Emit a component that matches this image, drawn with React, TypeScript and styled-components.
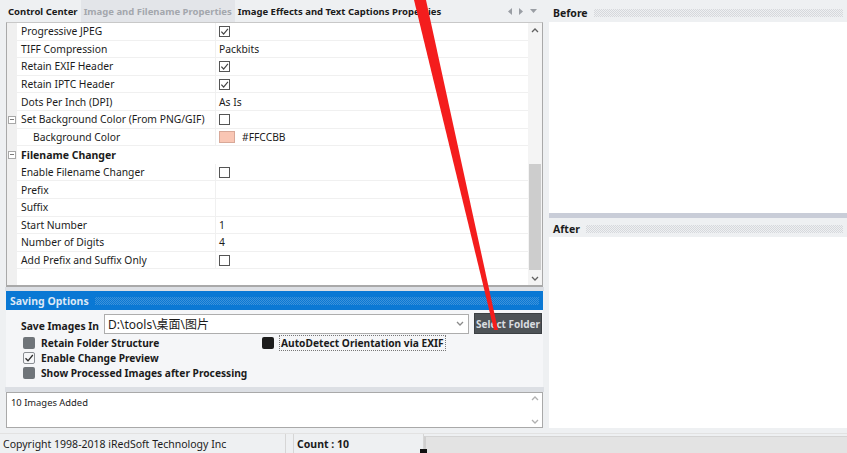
import React from "react";
import styled, { createGlobalStyle } from "styled-components";

const FONT = `"Noto Sans", "Noto Sans CJK SC", sans-serif`;

const Global = createGlobalStyle`
  html, body { margin: 0; padding: 0; background: #eef0f2; }
  body { font-family: ${FONT}; font-size: 10px; color: #1b1b1b; }
  * { box-sizing: border-box; }
`;

const Root = styled.div`
  position: relative;
  width: 847px;
  height: 453px;
  overflow: hidden;
  display: flex;
  flex-direction: column;
  background: #eef0f2;
`;

const Main = styled.div`
  display: flex;
  height: 433px;
`;

const LeftCol = styled.div`
  width: 547px;
  display: flex;
  flex-direction: column;
  padding-left: 6px;
  padding-right: 4px;
`;

const TabStrip = styled.div`
  height: 22px;
  display: flex;
  align-items: center;
  margin-left: -6px;
  padding-left: 5px;
`;

const Tab = styled.div<{ $active?: boolean }>`
  font-weight: 700;
  font-size: 9.5px;
  height: 22px;
  display: flex;
  align-items: center;
  padding: 0 3px;
  color: ${(p) => (p.$active ? "#a3a7ad" : "#1b1b1b")};
  background: ${(p) => (p.$active ? "#e3e5e9" : "transparent")};
  white-space: nowrap;
`;

const TabArrows = styled.div`
  margin-left: auto;
  display: flex;
  gap: 7px;
  padding-right: 6px;
  align-items: center;
`;

const Grid = styled.div`
  height: 265px;
  display: flex;
  background: #fff;
  border-left: 1px solid #a9a9a9;
  border-top: 1px solid #c8c8c8;
  border-right: 1px solid #a9a9a9;
  border-bottom: 2px solid #a9a9a9;
`;

const GridBody = styled.div`
  flex: 1;
  display: flex;
  flex-direction: column;
  background: linear-gradient(to right, #f0f0f0 10px, #fff 10px);
`;

const Row = styled.div`
  height: 17.6px;
  display: flex;
  align-items: stretch;
`;

const Margin = styled.div`
  width: 10px;
  display: flex;
  align-items: center;
  justify-content: center;
  background: #f0f0f0;
`;

const Label = styled.div<{ $indent?: boolean }>`
  width: 199px;
  display: flex;
  align-items: center;
  padding-left: ${(p) => (p.$indent ? 16 : 4)}px;
  border-bottom: 1px solid #f0f0f0;
  border-right: 1px solid #f0f0f0;
  white-space: nowrap;
  font-size: 10.3px;
`;

const Value = styled.div`
  flex: 1;
  display: flex;
  align-items: center;
  gap: 7px;
  padding-left: 3px;
  border-bottom: 1px solid #f0f0f0;
  font-size: 10.3px;
`;

const Category = styled.div`
  flex: 1;
  display: flex;
  align-items: center;
  padding-left: 4px;
  font-weight: 700;
  font-size: 10.5px;
`;

const Expander = styled.span`
  width: 8px;
  height: 8px;
  border: 1px solid #a8a8a8;
  background: #fff;
  display: flex;
  align-items: center;
  justify-content: center;
  &::after {
    content: "";
    width: 4px;
    height: 1px;
    background: #7a7a7a;
  }
`;

const GridCheck = styled.span`
  width: 11px;
  height: 11px;
  border: 1px solid #555;
  background: #fff;
  display: flex;
  align-items: center;
  justify-content: center;
`;

const Swatch = styled.span<{ $c: string }>`
  width: 16px;
  height: 12px;
  background: ${(p) => p.$c};
  border: 1px solid #d8a898;
`;

const Scrollbar = styled.div`
  width: 14px;
  background: #f4f4f4;
  display: flex;
  flex-direction: column;
  align-items: center;
`;

const ScrollArrow = styled.div`
  height: 14px;
  width: 14px;
  display: flex;
  align-items: center;
  justify-content: center;
`;

const ScrollTrack = styled.div`
  flex: 1;
  width: 12px;
  display: flex;
  flex-direction: column;
  justify-content: flex-end;
  padding-bottom: 1px;
`;

const Thumb = styled.div`
  height: 106px;
  background: #cdcdcd;
`;

const Gap = styled.div<{ $h: number }>`
  height: ${(p) => p.$h}px;
  background: #dcdfe4;
  margin: 0 -1px;
`;

const SectionHeader = styled.div<{ $blue?: boolean; $h: number }>`
  height: ${(p) => p.$h}px;
  display: flex;
  align-items: center;
  gap: 6px;
  padding-left: 4px;
  padding-top: ${(p) => (p.$blue ? 0 : 3)}px;
  font-weight: 700;
  font-size: 10.5px;
  color: ${(p) => (p.$blue ? "#dce8f6" : "#1b1b1b")};
  background: ${(p) => (p.$blue ? "#0a78d4" : "#eef0f2")};
`;

const Hatch = styled.span<{ $blue?: boolean }>`
  flex: 1;
  height: 8px;
  margin-right: 4px;
  background-image: repeating-conic-gradient(
    ${(p) => (p.$blue ? "#3d92da" : "#d6d8dc")} 0 25%,
    transparent 0 50%
  );
  background-size: 2px 2px;
`;

const SaveBody = styled.div`
  height: 77px;
  background: #f5f6f8;
  display: flex;
  flex-direction: column;
  padding: 3px 1px 0 15px;
`;

const SaveRow = styled.div`
  display: flex;
  align-items: center;
  height: 21px;
  gap: 5px;
`;

const SaveLabel = styled.div`
  font-weight: 700;
  font-size: 10.3px;
  width: 78px;
  padding-top: 4px;
  white-space: nowrap;
`;

const Combo = styled.div`
  width: 365px;
  height: 20px;
  background: #fff;
  border: 1px solid #adadad;
  display: flex;
  align-items: center;
  padding-left: 3px;
  font-size: 12px;
  justify-content: space-between;
  padding-right: 4px;
`;

const Button = styled.div`
  flex: 1;
  height: 21px;
  background: #4e5357;
  border: 1px solid #3c4043;
  color: #d9dde0;
  font-weight: 700;
  font-size: 10px;
  white-space: nowrap;
  display: flex;
  align-items: center;
  justify-content: center;
`;

const Options = styled.div`
  display: grid;
  grid-template-columns: 239px 1fr;
  grid-auto-rows: 15px;
  padding-left: 2px;
  margin-top: 1px;
`;

const Opt = styled.div`
  display: flex;
  align-items: center;
  gap: 6px;
  font-weight: 700;
  font-size: 10.2px;
  white-space: nowrap;
`;

const OptBox = styled.span<{ $kind: "gray" | "checked" | "black" }>`
  width: 12px;
  height: 12px;
  border-radius: 2px;
  display: flex;
  align-items: center;
  justify-content: center;
  background: ${(p) =>
    p.$kind === "gray" ? "#6f7479" : p.$kind === "black" ? "#1c1c1c" : "#f5f6f8"};
  border: 1px solid ${(p) => (p.$kind === "checked" ? "#8a8e93" : "transparent")};
`;

const Focus = styled.span`
  outline: 1px dotted #777;
  padding: 0 1px;
`;

const LogBox = styled.div`
  height: 36px;
  background: #fff;
  border: 1px solid #a9a9a9;
  display: flex;
  font-size: 9.4px;
`;

const LogText = styled.div`
  flex: 1;
  padding: 3px 0 0 4px;
`;

const LogScroll = styled.div`
  width: 14px;
  display: flex;
  flex-direction: column;
  justify-content: space-between;
  align-items: center;
  padding: 3px 0;
`;

const RightCol = styled.div`
  flex: 1;
  display: flex;
  flex-direction: column;
  padding-left: 2px;
`;

const Pane = styled.div<{ $h: number }>`
  height: ${(p) => p.$h}px;
  background: #fff;
`;

const Splitter = styled.div`
  height: 5px;
  background: #c9cdd8;
`;

const BottomGap = styled.div`
  height: 5px;
`;

const StatusBar = styled.div`
  height: 20px;
  display: flex;
  background: #eef0f2;
  border-top: 1px solid #e2e2e2;
  font-size: 10.5px;
`;

const StatusCell = styled.div<{ $w?: number; $bold?: boolean }>`
  width: ${(p) => (p.$w ? `${p.$w}px` : "auto")};
  flex: ${(p) => (p.$w ? "none" : 1)};
  display: flex;
  align-items: center;
  padding-left: 3px;
  font-weight: ${(p) => (p.$bold ? 700 : 400)};
  border-right: 1px solid #d6d6d6;
  white-space: nowrap;
`;

const StatusInset = styled.div`
  flex: 1;
  margin-top: 2px;
  background: #e3e3e3;
  border-left: 2px solid #cfcfcf;
  border-top: 1px solid #d4d4d4;
`;

const Overlay = styled.svg`
  position: absolute;
  left: 0;
  top: 0;
  pointer-events: none;
`;

const Check = ({ color = "#333", size = 9 }: { color?: string; size?: number }) => (
  <svg width={size} height={size} viewBox="0 0 10 10">
    <polyline points="1.5,5.2 4,7.8 8.8,2" fill="none" stroke={color} strokeWidth="1.3" />
  </svg>
);

const Chevron = ({ up, color = "#606060" }: { up?: boolean; color?: string }) => (
  <svg width="8" height="5" viewBox="0 0 8 5">
    <polyline
      points={up ? "1,4 4,1 7,4" : "1,1 4,4 7,1"}
      fill="none"
      stroke={color}
      strokeWidth="1.3"
    />
  </svg>
);

type Item =
  | { kind: "row"; label: string; check?: boolean; text?: string; swatch?: string; expander?: boolean; indent?: boolean }
  | { kind: "cat"; label: string };

const items: Item[] = [
  { kind: "row", label: "Progressive JPEG", check: true },
  { kind: "row", label: "TIFF Compression", text: "Packbits" },
  { kind: "row", label: "Retain EXIF Header", check: true },
  { kind: "row", label: "Retain IPTC Header", check: true },
  { kind: "row", label: "Dots Per Inch (DPI)", text: "As Is" },
  { kind: "row", label: "Set Background Color (From PNG/GIF)", check: false, expander: true },
  { kind: "row", label: "Background Color", swatch: "#f9c6b4", text: "#FFCCBB", indent: true },
  { kind: "cat", label: "Filename Changer" },
  { kind: "row", label: "Enable Filename Changer", check: false },
  { kind: "row", label: "Prefix", text: "" },
  { kind: "row", label: "Suffix", text: "" },
  { kind: "row", label: "Start Number", text: "1" },
  { kind: "row", label: "Number of Digits", text: "4" },
  { kind: "row", label: "Add Prefix and Suffix Only", check: false },
];

export default function App() {
  return (
    <Root>
      <Global />
      <Main>
        <LeftCol>
          <TabStrip>
            <Tab>Control Center</Tab>
            <Tab $active>Image and Filename Properties</Tab>
            <Tab>Image Effects and Text Captions Properties</Tab>
            <TabArrows>
              <svg width="4" height="7" viewBox="0 0 4 7"><polygon points="4,0 0,3.5 4,7" fill="#9a9ea4" /></svg>
              <svg width="4" height="7" viewBox="0 0 4 7"><polygon points="0,0 4,3.5 0,7" fill="#9a9ea4" /></svg>
              <svg width="7" height="4" viewBox="0 0 7 4"><polygon points="0,0 7,0 3.5,4" fill="#9a9ea4" /></svg>
            </TabArrows>
          </TabStrip>
          <Grid>
            <GridBody>
              {items.map((it, i) =>
                it.kind === "cat" ? (
                  <Row key={i}>
                    <Margin>
                      <Expander />
                    </Margin>
                    <Category>{it.label}</Category>
                  </Row>
                ) : (
                  <Row key={i}>
                    <Margin>{it.expander && <Expander />}</Margin>
                    <Label $indent={it.indent}>{it.label}</Label>
                    <Value>
                      {it.check !== undefined && (
                        <GridCheck>{it.check && <Check color="#444" size={9} />}</GridCheck>
                      )}
                      {it.swatch && <Swatch $c={it.swatch} />}
                      {it.text}
                    </Value>
                  </Row>
                )
              )}
            </GridBody>
            <Scrollbar>
              <ScrollArrow>
                <Chevron up />
              </ScrollArrow>
              <ScrollTrack>
                <Thumb />
              </ScrollTrack>
              <ScrollArrow>
                <Chevron />
              </ScrollArrow>
            </Scrollbar>
          </Grid>
          <Gap $h={4} />
          <SectionHeader $blue $h={19}>
            Saving Options
            <Hatch $blue />
          </SectionHeader>
          <SaveBody>
            <SaveRow>
              <SaveLabel>Save Images In</SaveLabel>
              <Combo>
                <span>D:\tools\桌面\图片</span>
                <Chevron color="#8a8a8a" />
              </Combo>
              <Button>Select Folder</Button>
            </SaveRow>
            <Options>
              <Opt>
                <OptBox $kind="gray" />
                Retain Folder Structure
              </Opt>
              <Opt>
                <OptBox $kind="black" />
                <Focus>AutoDetect Orientation via EXIF</Focus>
              </Opt>
              <Opt>
                <OptBox $kind="checked">
                  <Check color="#2a2a2a" size={10} />
                </OptBox>
                Enable Change Preview
              </Opt>
              <span />
              <Opt>
                <OptBox $kind="gray" />
                Show Processed Images after Processing
              </Opt>
            </Options>
          </SaveBody>
          <Gap $h={5} />
          <LogBox>
            <LogText>10 Images Added</LogText>
            <LogScroll>
              <Chevron up color="#b0b0b0" />
              <Chevron color="#b0b0b0" />
            </LogScroll>
          </LogBox>
        </LeftCol>
        <RightCol>
          <SectionHeader $h={22}>
            Before
            <Hatch />
          </SectionHeader>
          <Pane $h={191} />
          <Splitter />
          <SectionHeader $h={19}>
            After
            <Hatch />
          </SectionHeader>
          <Pane $h={191} />
          <BottomGap />
        </RightCol>
      </Main>
      <StatusBar>
        <StatusCell $w={286}>Copyright 1998-2018 iRedSoft Technology Inc</StatusCell>
        <StatusCell $w={8} />
        <StatusCell $w={130} $bold>
          Count : 10
        </StatusCell>
        <StatusInset />
      </StatusBar>
      <Overlay width="847" height="453" viewBox="0 0 847 453">
        <polygon points="414,0 426,0 498,330 494,330" fill="#f41d1d" />
        <rect x="420" y="449" width="7" height="4" fill="#111" />
      </Overlay>
    </Root>
  );
}
